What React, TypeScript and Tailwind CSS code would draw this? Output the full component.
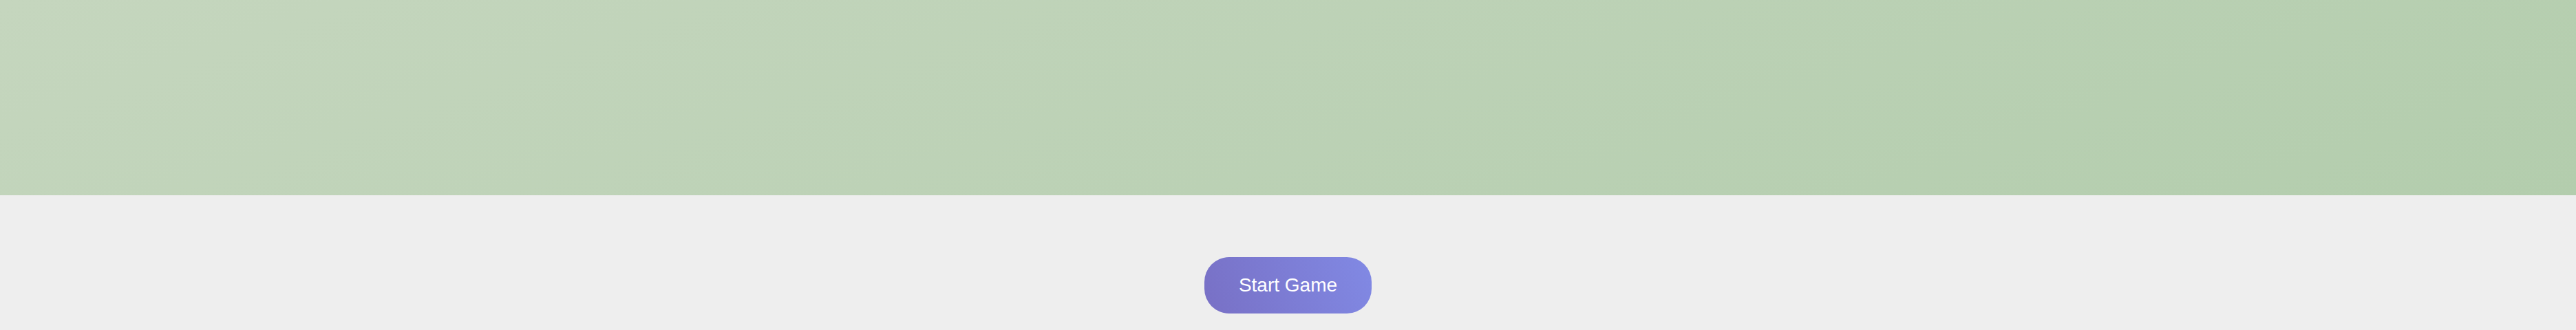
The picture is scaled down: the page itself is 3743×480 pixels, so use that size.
export default function App() {
  return (
    <div className="min-h-screen bg-[#eeeeee] font-['Liberation_Sans',Arial,sans-serif]">
      <header className="h-[284px] w-full bg-[linear-gradient(160deg,#c5d6be_0%,#b3cdad_100%)]" />
      <main className="flex justify-center pt-[90px]">
        <button className="flex h-[82px] w-[243px] items-center justify-center rounded-[36px] bg-[linear-gradient(70deg,#7870c5_0%,#8189e4_100%)] text-[28px] text-white">
          Start Game
        </button>
      </main>
    </div>
  );
}
